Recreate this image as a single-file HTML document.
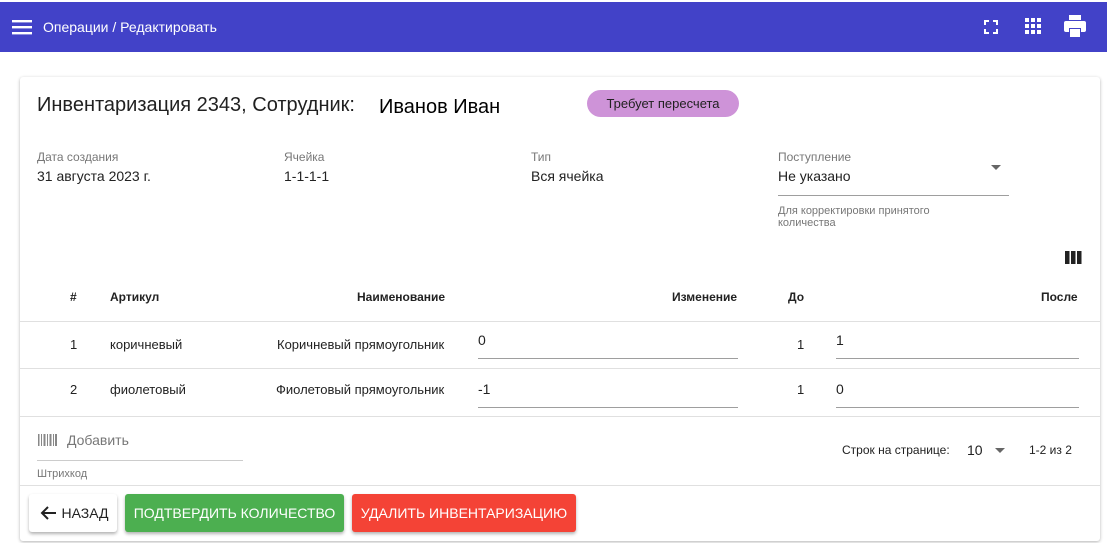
<!DOCTYPE html>
<html><head><meta charset="utf-8"><style>
*{box-sizing:border-box;margin:0;padding:0}
body{width:1107px;height:543px;overflow:hidden;background:#fff;font-family:"Liberation Sans",Arial,sans-serif;color:#212121;position:relative}
.bar{position:absolute;left:0;top:2px;width:1107px;height:50px;background:#4242c8;color:#fff}
.abs{position:absolute;white-space:nowrap}
.card{position:absolute;left:20px;top:77px;width:1080px;height:464px;background:#fff;box-shadow:0 1px 3px rgba(0,0,0,.3);border-radius:3px}
.lbl{font-size:12px;color:#777}
.val{font-size:14px;color:#222}
.th{font-size:12px;font-weight:bold;color:#222}
.td{font-size:13px;color:#222}
.hl{position:absolute;height:1px;background:#e0e0e0}
.ul{position:absolute;height:1px;background:#9e9e9e}
.btn{position:absolute;top:417px;height:38px;border-radius:3px;font-size:14px;line-height:38px;text-align:center;color:#fff;box-shadow:0 2px 3px rgba(0,0,0,.3)}
</style></head><body>
<div class="bar">
<svg class="abs" style="left:12px;top:17px" width="20" height="16"><rect y="1" width="20" height="2.4" fill="#fff"/><rect y="7" width="20" height="2.4" fill="#fff"/><rect y="13" width="20" height="2.4" fill="#fff"/></svg>
<div class="abs" style="left:43px;top:17px;font-size:14px">Операции / Редактировать</div>
<svg class="abs" style="left:984px;top:18px" width="14" height="14" fill="none" stroke="#fff" stroke-width="2"><path d="M1 5V1h4M9 1h4v4M13 9v4H9M5 13H1V9"/></svg>
<svg class="abs" style="left:1025px;top:16px" width="16" height="16" fill="#fff"><rect x="0" y="0" width="4" height="4"/><rect x="6" y="0" width="4" height="4"/><rect x="12" y="0" width="4" height="4"/><rect x="0" y="6" width="4" height="4"/><rect x="6" y="6" width="4" height="4"/><rect x="12" y="6" width="4" height="4"/><rect x="0" y="12" width="4" height="4"/><rect x="6" y="12" width="4" height="4"/><rect x="12" y="12" width="4" height="4"/></svg>
<svg class="abs" style="left:1064px;top:13px" width="22" height="24" fill="#fff"><rect x="5" y="0" width="12" height="5"/><rect x="0" y="6" width="22" height="11" rx="2"/><rect x="5" y="13" width="12" height="9" fill="#4242c8"/><rect x="6" y="14" width="10" height="8"/></svg>
</div>
<div class="card">
<div class="abs" style="left:17px;top:17px;font-size:20px">Инвентаризация 2343, Сотрудник:</div>
<div class="abs" style="left:359px;top:19px;font-size:20px;color:#000">Иванов Иван</div>
<div class="abs" style="left:567px;top:13px;width:152px;height:27px;border-radius:14px;background:#ce93d8;font-size:13px;line-height:27px;text-align:center">Требует пересчета</div>
<div class="abs lbl" style="left:17px;top:73px">Дата создания</div><div class="abs val" style="left:17px;top:91px">31 августа 2023 г.</div>
<div class="abs lbl" style="left:264px;top:73px">Ячейка</div><div class="abs val" style="left:264px;top:91px">1-1-1-1</div>
<div class="abs lbl" style="left:511px;top:73px">Тип</div><div class="abs val" style="left:511px;top:91px">Вся ячейка</div>
<div class="abs lbl" style="left:758px;top:73px">Поступление</div><div class="abs val" style="left:758px;top:91px">Не указано</div>
<svg class="abs" style="left:971px;top:88px" width="10" height="6"><path d="M0 0h10L5 5z" fill="#666"/></svg>
<div class="ul" style="left:758px;top:118px;width:231px"></div>
<div class="abs lbl" style="left:758px;top:128px;font-size:11px;line-height:12px;white-space:normal;width:200px">Для корректировки принятого количества</div>
<svg class="abs" style="left:1045px;top:174px" width="17" height="13" fill="#222"><rect x="0" y="0" width="4.5" height="13"/><rect x="6" y="0" width="4.5" height="13"/><rect x="12" y="0" width="4.5" height="13"/></svg>
<div class="abs th" style="left:50px;top:213px">#</div>
<div class="abs th" style="left:90px;top:213px">Артикул</div>
<div class="abs th" style="left:337px;top:213px">Наименование</div>
<div class="abs th" style="left:652px;top:213px">Изменение</div>
<div class="abs th" style="left:768px;top:213px">До</div>
<div class="abs th" style="left:1021px;top:213px">После</div>
<div class="hl" style="left:0;top:244px;width:1080px"></div>
<div class="abs td" style="left:50px;top:260px">1</div><div class="abs td" style="left:90px;top:260px">коричневый</div><div class="abs td" style="left:257px;top:260px">Коричневый прямоугольник</div>
<div class="abs val" style="left:458px;top:255px">0</div><div class="ul" style="left:458px;top:281px;width:260px"></div>
<div class="abs td" style="left:777px;top:260px">1</div>
<div class="abs val" style="left:816px;top:255px">1</div><div class="ul" style="left:816px;top:281px;width:243px"></div>
<div class="hl" style="left:0;top:291px;width:1080px"></div>
<div class="abs td" style="left:50px;top:305px">2</div><div class="abs td" style="left:90px;top:305px">фиолетовый</div><div class="abs td" style="left:256px;top:305px">Фиолетовый прямоугольник</div>
<div class="abs val" style="left:458px;top:304px">-1</div><div class="ul" style="left:458px;top:330px;width:260px"></div>
<div class="abs td" style="left:777px;top:305px">1</div>
<div class="abs val" style="left:816px;top:304px">0</div><div class="ul" style="left:816px;top:330px;width:243px"></div>
<div class="hl" style="left:0;top:339px;width:1080px"></div>
<svg class="abs" style="left:18px;top:357px" width="20" height="12" fill="#888"><rect x="0" width="1.5" height="12"/><rect x="3" width="1" height="12"/><rect x="5.5" width="2" height="12"/><rect x="9" width="1" height="12"/><rect x="11.5" width="2" height="12"/><rect x="15" width="1" height="12"/><rect x="17" width="2" height="12"/></svg>
<div class="abs" style="left:47px;top:355px;font-size:14px;color:#777">Добавить</div>
<div class="ul" style="left:17px;top:383px;width:206px;background:#ccc"></div>
<div class="abs lbl" style="left:17px;top:391px;font-size:11px">Штрихкод</div>
<div class="abs" style="left:822px;top:366px;font-size:12px">Строк на странице:</div>
<div class="abs" style="left:947px;top:365px;font-size:14px">10</div>
<svg class="abs" style="left:975px;top:371px" width="10" height="6"><path d="M0 0h10L5 5z" fill="#666"/></svg>
<div class="abs" style="left:1009px;top:366px;font-size:12px">1-2 из 2</div>
<div class="hl" style="left:0;top:408px;width:1080px"></div>
<div class="btn" style="left:9px;width:88px;background:#fff;color:#222">
<svg style="position:absolute;left:11px;top:11px" width="17" height="16" fill="none" stroke="#222" stroke-width="2"><path d="M16 8H2M8 2L2 8l6 6"/></svg><span style="margin-left:24px">НАЗАД</span></div>
<div class="btn" style="left:105px;width:219px;background:#4caf50">ПОДТВЕРДИТЬ КОЛИЧЕСТВО</div>
<div class="btn" style="left:332px;width:224px;background:#f44336">УДАЛИТЬ ИНВЕНТАРИЗАЦИЮ</div>
</div>
</body></html>
